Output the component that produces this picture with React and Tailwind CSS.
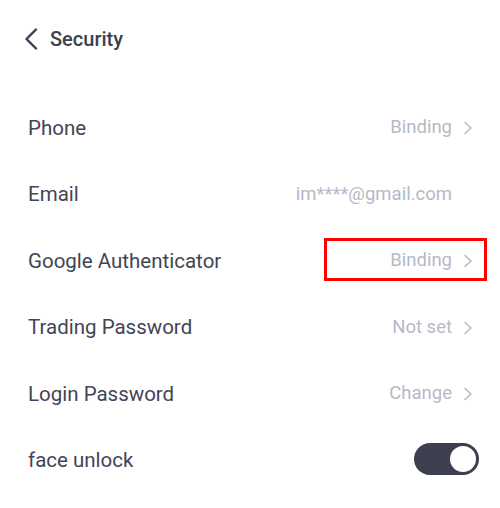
import { useState } from "react";

const rows = [
  { label: "Phone", value: "Binding", arrow: true },
  { label: "Email", value: "im****@gmail.com", arrow: false },
  { label: "Google Authenticator", value: "Binding", arrow: true, marked: true },
  { label: "Trading Password", value: "Not set", arrow: true },
  { label: "Login Password", value: "Change", arrow: true },
];

function Chevron() {
  return (
    <svg width="10" height="14" viewBox="0 0 10 14" fill="none" className="ml-[11px]">
      <path d="M2 1.5L8 7L2 12.5" stroke="#b6b9c8" strokeWidth="1.6" strokeLinecap="round" strokeLinejoin="round" />
    </svg>
  );
}

export default function App() {
  const [faceUnlock, setFaceUnlock] = useState(true);

  return (
    <div className="w-[500px] h-[508px] bg-white font-['Roboto',sans-serif] text-[#424555]">
      <div className="flex items-center h-[78px] pl-[24px]">
        <svg width="14" height="22" viewBox="0 0 14 22" fill="none">
          <path d="M12 1.5L2.5 11L12 20.5" stroke="#3c3f4f" strokeWidth="2.4" strokeLinecap="round" strokeLinejoin="round" />
        </svg>
        <h1 className="ml-[12px] text-[20px] font-medium text-[#3c3f4f]">Security</h1>
      </div>

      <div className="mt-[17px]">
        {rows.map((row) => (
          <div key={row.label} className="relative flex items-center justify-between h-[66.5px] pl-[28px] pr-[27px]">
            <span className="text-[20.5px]">{row.label}</span>
            <div className="flex items-center text-[18.5px] text-[#b6b9c8]">
              <span>{row.value}</span>
              {row.arrow ? <Chevron /> : <span className="w-[21px]" />}
            </div>
            {row.marked && (
              <div className="absolute right-[13px] top-[10px] w-[163px] h-[43px] border-[3px] border-[#ff0000]" />
            )}
          </div>
        ))}

        <div className="flex items-center justify-between h-[66.5px] pl-[28px] pr-[21px]">
          <span className="text-[20.5px]">face unlock</span>
          <button
            onClick={() => setFaceUnlock(!faceUnlock)}
            className={`flex items-center w-[65px] h-[32px] rounded-full px-[3px] mt-[-4px] ${faceUnlock ? "justify-end bg-[#3e3f4f]" : "justify-start bg-[#d5d7df]"}`}
          >
            <span className="w-[26px] h-[26px] rounded-full bg-white" />
          </button>
        </div>
      </div>
    </div>
  );
}
